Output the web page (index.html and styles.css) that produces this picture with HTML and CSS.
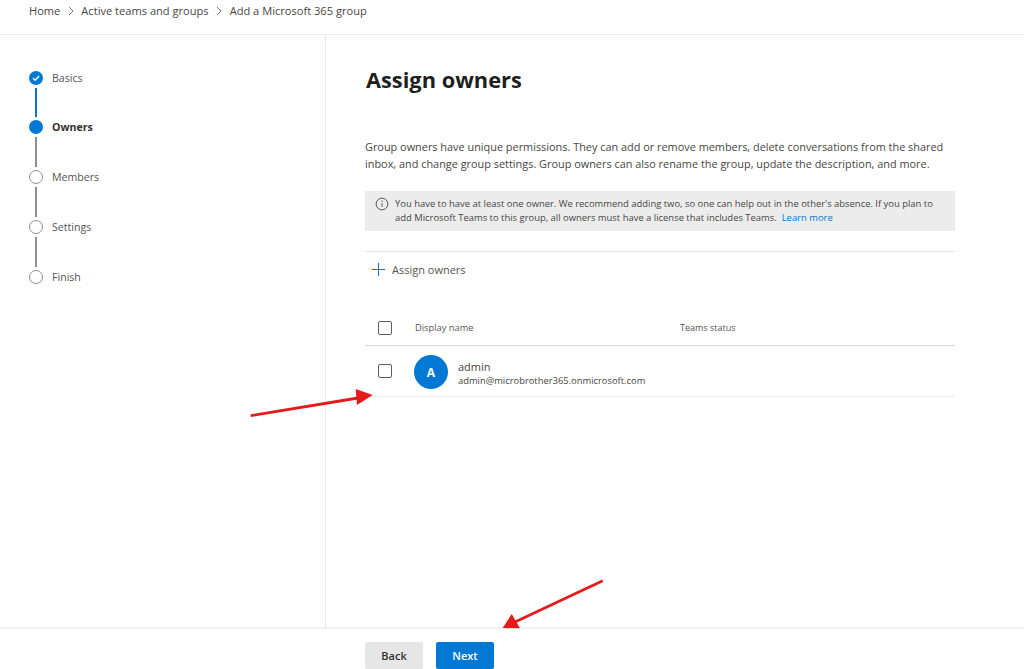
FILE: index.html
```html
<!DOCTYPE html>
<html lang="en">
<head>
<meta charset="utf-8">
<title>Add a Microsoft 365 group</title>
<link rel="stylesheet" href="styles.css">
</head>
<body>
<div class="page">
  <nav class="crumbs">
    <span>Home</span>
    <svg class="chev" viewBox="0 0 8 10"><path d="M2 1l4 4-4 4" fill="none" stroke="#777" stroke-width="1"/></svg>
    <span>Active teams and groups</span>
    <svg class="chev" viewBox="0 0 8 10"><path d="M2 1l4 4-4 4" fill="none" stroke="#777" stroke-width="1"/></svg>
    <span>Add a Microsoft 365 group</span>
  </nav>
  <div class="main">
    <aside class="steps">
      <div class="step">
        <span class="dot dot-done"><svg viewBox="0 0 14 14"><path d="M4 7.3l2.1 2L10.2 5" fill="none" stroke="#fff" stroke-width="1.3"/></svg></span>
        <span class="step-label">Basics</span>
      </div>
      <div class="line line-done"></div>
      <div class="step">
        <span class="dot dot-current"></span>
        <span class="step-label step-current">Owners</span>
      </div>
      <div class="line"></div>
      <div class="step">
        <span class="dot"></span>
        <span class="step-label">Members</span>
      </div>
      <div class="line"></div>
      <div class="step">
        <span class="dot"></span>
        <span class="step-label">Settings</span>
      </div>
      <div class="line"></div>
      <div class="step">
        <span class="dot"></span>
        <span class="step-label">Finish</span>
      </div>
    </aside>
    <section class="content">
      <h1>Assign owners</h1>
      <p class="intro">Group owners have unique permissions. They can add or remove members, delete conversations from the shared inbox, and change group settings. Group owners can also rename the group, update the description, and more.</p>
      <div class="notice">
        <svg class="info" viewBox="0 0 14 14"><circle cx="7" cy="7" r="5.9" fill="none" stroke="#555" stroke-width="1"/><path d="M7 6.2v3.6" stroke="#555" stroke-width="1"/><circle cx="7" cy="4.3" r=".7" fill="#555"/></svg>
        <p>You have to have at least one owner. We recommend adding two, so one can help out in the other's absence. If you plan to add Microsoft Teams to this group, all owners must have a license that includes Teams. &nbsp;<a href="#">Learn more</a></p>
      </div>
      <div class="command">
        <svg class="plus" viewBox="0 0 14 14"><path d="M7 0v14M0 7h14" stroke="#0078d4" stroke-width="1.1"/></svg>
        <span>Assign owners</span>
      </div>
      <div class="row row-head">
        <span class="check"></span>
        <span class="col-name">Display name</span>
        <span class="col-status">Teams status</span>
      </div>
      <div class="row row-item">
        <span class="check"></span>
        <span class="avatar">A</span>
        <div class="person">
          <div class="person-name">admin</div>
          <div class="person-mail">admin@microbrother365.onmicrosoft.com</div>
        </div>
      </div>
    </section>
  </div>
  <footer class="footer">
    <button class="btn btn-back">Back</button>
    <button class="btn btn-next">Next</button>
  </footer>
  <svg class="arrow arrow-owner" viewBox="0 0 130 34"><path d="M0.7 29.7L108 12" stroke="#e31b1b" stroke-width="2.8"/><path d="M122.7 9L105.7 3L107 19z" fill="#e31b1b"/></svg>
  <svg class="arrow arrow-next" viewBox="0 0 110 60"><path d="M104.7 8.7L17 50" stroke="#e31b1b" stroke-width="2.8"/><path d="M4.7 56L13.7 42L22 56.3z" fill="#e31b1b"/></svg>
</div>
</body>
</html>
```
FILE: styles.css
```css
* { box-sizing: border-box; }
html, body { margin: 0; padding: 0; }
body {
  font-family: "Open Sans", "Noto Sans", "Liberation Sans", sans-serif;
  color: #323130;
  background: #fff;
}
.page {
  position: relative;
  width: 1024px;
  height: 669px;
  overflow: hidden;
  display: flex;
  flex-direction: column;
}
.crumbs {
  height: 35px;
  flex: none;
  border-bottom: 1px solid #ebebeb;
  padding: 3px 0 0 29px;
  display: flex;
  align-items: flex-start;
  font-size: 11.1px;
  line-height: 16px;
  color: #484644;
}
.chev { width: 8px; height: 10px; margin: 3px 6px 0 7px; }
.chev + span + .chev { margin-left: 6px; margin-right: 7px; }
.main { flex: 1; display: flex; min-height: 0; }
.steps {
  width: 326px;
  flex: none;
  border-right: 1px solid #eaeaea;
  padding: 35.6px 0 0 29px;
}
.step { display: flex; align-items: center; height: 14px; }
.dot {
  width: 14px;
  height: 14px;
  flex: none;
  border: 1.5px solid #8f8f8f;
  border-radius: 50%;
  background: #fff;
}
.dot-done { border: 0; background: #0078d4; display: block; }
.dot-done svg { display: block; width: 14px; height: 14px; }
.dot-current { border: 0; background: #0078d4; }
.step-label {
  margin-left: 9px;
  font-size: 10.6px;
  line-height: 14px;
  color: #555;
}
.step-current { font-weight: 700; color: #323130; }
.line {
  width: 2px;
  height: 29.75px;
  margin: 3px 0 3px 6px;
  background: #8f8f8f;
}
.line-done { background: #0078d4; }
.content { flex: 1; padding: 30px 69px 0 39px; min-width: 0; }
h1 {
  margin: 0 0 0 1px;
  font-size: 21.8px;
  line-height: 30px;
  font-weight: 700;
  color: #201f1e;
}
.intro {
  margin: 43px 0 0;
  font-size: 10.9px;
  line-height: 17px;
  color: #484644;
}
.notice {
  margin-top: 19px;
  height: 40px;
  background: #ececec;
  padding: 6px 10px;
  display: flex;
  gap: 6px;
}
.info { width: 14px; height: 14px; flex: none; margin-top: 0; }
.notice p {
  margin: 0;
  font-size: 9.44px;
  line-height: 14px;
  color: #484644;
}
.notice a { color: #0078d4; text-decoration: none; }
.command {
  margin-top: 20px;
  border-top: 1px solid #e5e5e5;
  height: 36px;
  display: flex;
  align-items: center;
  padding-left: 7px;
  gap: 7px;
  font-size: 11px;
  color: #555;
}
.plus { width: 13px; height: 13px; }
.row { display: flex; align-items: center; }
.row-head {
  margin-top: 23px;
  height: 36px;
  padding-left: 13px;
  border-bottom: 1px solid #d8d8d8;
  font-size: 9.3px;
  color: #555;
}
.check {
  width: 14px;
  height: 14px;
  flex: none;
  border: 1px solid #605e5c;
  border-radius: 2px;
  background: #fff;
}
.col-name { margin-left: 23px; width: 265px; }
.col-status { font-size: 9px; }
.row-item {
  height: 51px;
  padding-left: 13px;
  border-bottom: 1px solid #efefef;
}
.avatar {
  width: 34px;
  height: 34px;
  flex: none;
  margin: 2px 0 0 22px;
  border-radius: 50%;
  background: #0078d4;
  color: #fff;
  font-size: 12px;
  font-weight: 700;
  display: flex;
  align-items: center;
  justify-content: center;
}
.person { margin-left: 10px; margin-top: 3px; }
.person-name { font-size: 11px; line-height: 15px; color: #484644; }
.person-mail { font-size: 9.4px; line-height: 13px; color: #484644; }
.footer {
  height: 42px;
  flex: none;
  border-top: 2px solid #f1f1f1;
  padding: 13px 0 0 365px;
  display: flex;
  gap: 13px;
}
.btn {
  width: 58px;
  height: 27px;
  border: 0;
  border-radius: 2px;
  font-family: inherit;
  font-size: 11px;
  font-weight: 600;
  padding: 0;
}
.btn-back { background: #e6e6e6; color: #323130; }
.btn-next { background: #0078d4; color: #fff; }
.arrow { position: absolute; display: block; }
.arrow-owner { left: 250px; top: 386px; width: 130px; height: 34px; }
.arrow-next { left: 498px; top: 572px; width: 110px; height: 60px; }
```
